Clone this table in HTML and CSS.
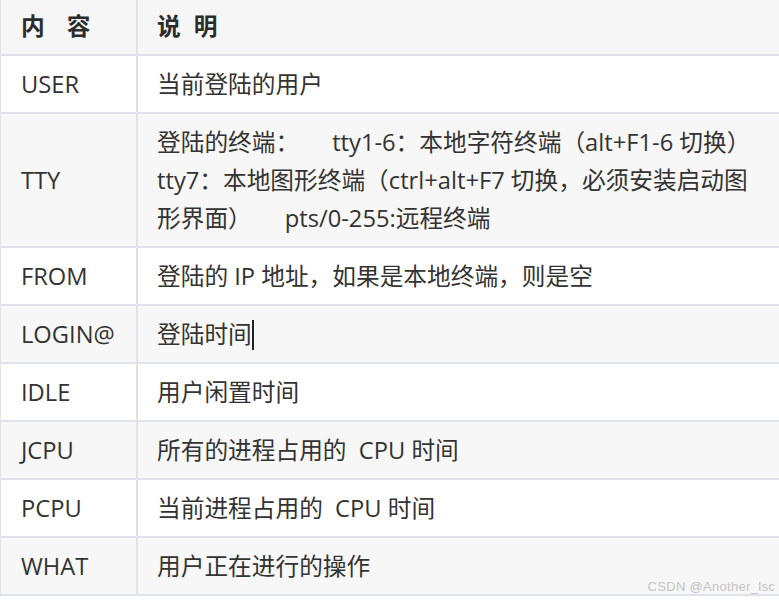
FILE: index.html
```html
<!DOCTYPE html>
<html lang="zh">
<head>
<meta charset="utf-8">
<link rel="stylesheet" href="styles.css">
</head>
<body>
<table class="tbl">
  <thead>
    <tr><th class="c1">内<span class="gap-a"></span>容</th><th class="c2">说<span class="gap-b"></span>明</th></tr>
  </thead>
  <tbody>
    <tr><td class="c1">USER</td><td class="c2">当前登陆的用户</td></tr>
    <tr class="alt"><td class="c1">TTY</td><td class="c2">登陆的终端：<span class="gap-c"></span>tty1-6：本地字符终端（alt+F1-6 切换）<br>tty7：本地图形终端（ctrl+alt+F7 切换，必须安装启动图<br>形界面）<span class="gap-c"></span>pts/0-255:远程终端</td></tr>
    <tr><td class="c1">FROM</td><td class="c2">登陆的 IP 地址，如果是本地终端，则是空</td></tr>
    <tr class="alt"><td class="c1">LOGIN@</td><td class="c2">登陆时间<span class="caret"></span></td></tr>
    <tr><td class="c1">IDLE</td><td class="c2">用户闲置时间</td></tr>
    <tr class="alt"><td class="c1">JCPU</td><td class="c2">所有的进程占用的&nbsp; CPU 时间</td></tr>
    <tr><td class="c1">PCPU</td><td class="c2">当前进程占用的&nbsp; CPU 时间</td></tr>
    <tr class="alt"><td class="c1">WHAT</td><td class="c2">用户正在进行的操作</td></tr>
  </tbody>
</table>
<div class="mark">CSDN @Another_lsc</div>
</body>
</html>
```

FILE: styles.css
```css
html, body {
  margin: 0;
  padding: 0;
  background: #ffffff;
  overflow: hidden;
}
body {
  width: 779px;
  height: 600px;
  position: relative;
  font-family: "Open Sans", "Noto Sans CJK SC", sans-serif;
  color: #333333;
}
.tbl {
  border-collapse: collapse;
  margin-top: -4px;
  width: 800px;
  font-size: 23.7px;
  line-height: 38px;
}
.tbl th, .tbl td {
  border: 2px solid #dfe2e6;
  padding: 9px 19px 9px 19px;
  text-align: left;
  vertical-align: middle;
  white-space: nowrap;
}
.tbl th {
  font-weight: 700;
  background: #f6f6f6;
  color: #2c2c2c;
}
.tbl .c1 {
  width: 96px;
  border-left-width: 1px;
  padding-left: 20px;
}
.tbl .c2 {
  padding-left: 19px;
}
.tbl tr.alt td {
  background: #f7f7f7;
}
.gap-a {
  display: inline-block;
  width: 22px;
}
.gap-b {
  display: inline-block;
  width: 13px;
}
.gap-c {
  display: inline-block;
  width: 33px;
}
.caret {
  display: inline-block;
  width: 2px;
  height: 30px;
  background: #222;
  vertical-align: -7px;
  margin-left: 0;
}
.mark {
  position: absolute;
  right: 4px;
  bottom: 6px;
  font-family: "Liberation Sans", "DejaVu Sans", sans-serif;
  font-size: 13px;
  color: #c4c4c4;
  letter-spacing: 0.3px;
}
```
